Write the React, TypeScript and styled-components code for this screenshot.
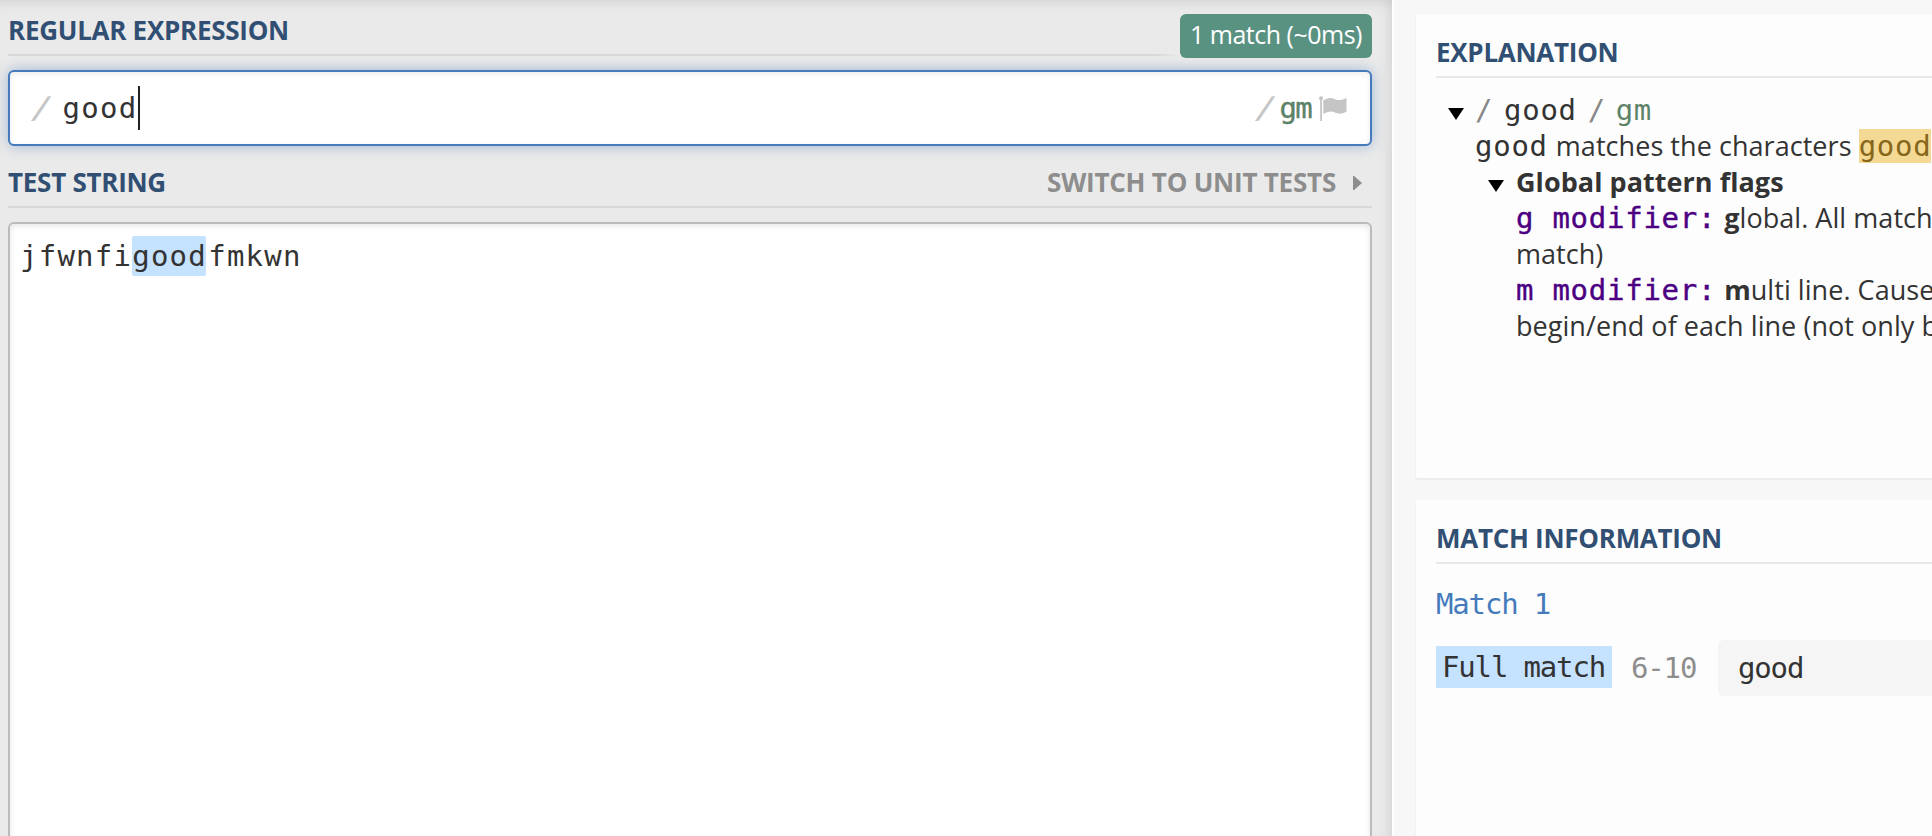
import React from "react";
import styled, { createGlobalStyle } from "styled-components";

const sans = `"Open Sans", "Noto Sans", sans-serif`;
const mono = `"DejaVu Sans Mono", "Liberation Mono", monospace`;

const GlobalStyle = createGlobalStyle`
  * { box-sizing: border-box; }
  body { margin: 0; overflow: hidden; background: #f7f7f7; }
`;

const Page = styled.div`
  display: flex;
  width: 1932px;
  height: 836px;
  overflow: hidden;
  font-family: ${sans};
  font-size: 26px;
  color: #333;
`;

const Editor = styled.main`
  flex: none;
  display: flex;
  flex-direction: column;
  width: 1394px;
  padding: 0 20px 0 8px;
  border-right: 2px solid #fff;
  background: #eaeaea;
  box-shadow: inset -12px 0 14px -10px rgba(0, 0, 0, 0.1), inset 0 12px 14px -10px rgba(0, 0, 0, 0.1);
`;

const TitleRow = styled.header<{ $fade?: boolean }>`
  position: relative;
  flex: none;
  display: flex;
  justify-content: space-between;
  height: 56px;
  border-bottom: 2px solid;
  border-color: ${(p) => (p.$fade ? "transparent" : "#d8d8d8")};
  ${(p) =>
    p.$fade &&
    `background: linear-gradient(90deg, #d8d8d8 1148px, transparent 1172px) left bottom / 100% 2px no-repeat border-box;`}
`;

const Title = styled.h2<{ $muted?: boolean }>`
  margin: 0;
  padding-top: 12px;
  font-size: 26px;
  line-height: 36px;
  font-weight: 700;
  letter-spacing: ${(p) => (p.$muted ? "-0.22px" : "-0.27px")};
  color: ${(p) => (p.$muted ? "#8d8d8d" : "#314f73")};
`;

const SwitchLink = styled.div`
  display: flex;
  gap: 17px;
  padding-right: 10px;
`;

const ArrowRight = styled.span`
  width: 9px;
  height: 14px;
  margin-top: 24px;
  background: #8d8d8d;
  clip-path: polygon(0 0, 12% 0, 100% 50%, 12% 100%, 0 100%);
`;

const MatchBadge = styled.div`
  width: 192px;
  height: 44px;
  margin-top: 14px;
  border-radius: 6px;
  background: #5a9282;
  color: #fff;
  font-size: 25px;
  letter-spacing: -0.5px;
  line-height: 41px;
  text-align: center;
  white-space: nowrap;
`;

const RegexField = styled.div`
  flex: none;
  display: flex;
  align-items: center;
  height: 76px;
  margin: 14px 0 6px;
  padding: 0 23px 0 23px;
  border: 2px solid #457bbb;
  border-radius: 6px;
  background: #fff;
  box-shadow: 0 0 14px rgba(69, 123, 187, 0.45), inset 0 2px 6px rgba(0, 0, 0, 0.08);
`;

const Mono = styled.span<{ $pitch: number; $color?: string; $heavy?: boolean; $left?: number }>`
  margin-left: ${(p) => p.$left ?? 0}px;
  font-family: ${mono};
  font-size: 29px;
  line-height: 36px;
  letter-spacing: ${(p) => p.$pitch - 17.46}px;
  color: ${(p) => p.$color ?? "#333"};
  ${(p) => p.$heavy && "-webkit-text-stroke: 0.4px currentColor;"}
  white-space: pre;
`;

const Slash = styled(Mono)`
  transform: skewX(-12deg);
  -webkit-text-stroke: 0.6px currentColor;
`;

const Caret = styled.span`
  width: 2px;
  height: 44px;
  margin-right: auto;
  background: #222;
`;

const FlagIcon = styled.svg`
  width: 28px;
  height: 25px;
  margin-left: 8px;
  fill: #c5c5c5;
`;

const TestArea = styled.div`
  flex: 1;
  margin-top: 14px;
  margin-bottom: -10px;
  padding: 12px 10px;
  border: 2px solid #bbb;
  border-radius: 6px;
  background: #fff;
  box-shadow: inset 0 2px 6px rgba(0, 0, 0, 0.1);
`;

const TestLine = styled.div`
  display: flex;
  & > span { line-height: 41px; height: 40px; }
`;

const Highlight = styled(Mono)`
  width: 74px;
  margin-right: 2px;
  border-radius: 2px;
  background: #c5e2ff;
`;

const Sidebar = styled.aside`
  flex: none;
  display: flex;
  flex-direction: column;
  gap: 20px;
  width: 538px;
  padding: 14px 0 0 21px;
  background: #f7f7f7;
`;

const Card = styled.section<{ $height: number }>`
  flex: none;
  height: ${(p) => p.$height}px;
  padding: 7px 0 0 20px;
  border: 1px solid #f1f1f1;
  border-right: 0;
  border-top-color: #fdfdfd;
  border-bottom: 2px solid #ececec;
  border-radius: 4px 0 0 4px;
  background: #fdfdfd;
`;

const CardTitle = styled(TitleRow)`
  height: 56px;
  border-color: #e8e8e8;
`;

const Tree = styled.div`
  display: flex;
  flex-direction: column;
  padding: 14px 0 0 12px;
`;

const Line = styled.div<{ $indent?: number }>`
  display: flex;
  align-items: baseline;
  height: 36px;
  padding-left: ${(p) => p.$indent ?? 0}px;
  font-size: 27px;
  letter-spacing: 0.05px;
  line-height: 36px;
  white-space: pre;
`;

const Copy = styled.span`
  margin-left: 8px;
`;

const Toggle = styled.span<{ $gap: number }>`
  width: 16px;
  height: 12px;
  margin-right: ${(p) => p.$gap}px;
  background: #000;
  clip-path: polygon(0 0, 100% 0, 50% 100%);
`;

const Literal = styled(Mono)`
  height: 34px;
  line-height: 34px;
  background: #f3d994;
`;

const MatchTitle = styled.div`
  margin-top: 22px;
  height: 36px;
`;

const MatchRow = styled.div`
  display: flex;
  align-items: center;
  margin-top: 18px;
`;

const GroupTag = styled.div`
  width: 176px;
  height: 42px;
  margin-top: -2px;
  padding-left: 6px;
  background: #c5e2ff;
  line-height: 42px;
`;

const Range = styled.div`
  width: 106px;
  padding-left: 19px;
`;

const MatchValue = styled.div`
  flex: 1;
  height: 56px;
  padding: 10px 0 0 20px;
  border-radius: 6px 0 0 6px;
  background: #f5f5f5;
`;

export default function App() {
  return (
    <Page>
      <GlobalStyle />
      <Editor>
        <TitleRow $fade>
          <Title>REGULAR EXPRESSION</Title>
          <MatchBadge>1 match (~0ms)</MatchBadge>
        </TitleRow>
        <RegexField>
          <Slash $pitch={17.4} $color="#c5c5c5">/</Slash>
          <Mono $pitch={18.8} $left={12}>good</Mono>
          <Caret />
          <Slash $pitch={17.4} $color="#c5c5c5">/</Slash>
          <Mono $pitch={15.8} $color="#5c8368" $heavy $left={5}>gm</Mono>
          <FlagIcon viewBox="0 0 28 25">
            <circle cx="2" cy="2.2" r="2" />
            <path d="M1.2 3H3V25H1.2Z" />
            <path d="M4.3 4.5C8 2.3 12 1 16 3.3C20 5 24 3.8 27.5 2V15.8C23 18 19.5 18.5 15.5 16.3C12 14.5 8 16 4.3 18Z" />
          </FlagIcon>
        </RegexField>
        <TitleRow>
          <Title>TEST STRING</Title>
          <SwitchLink>
            <Title $muted>SWITCH TO UNIT TESTS</Title>
            <ArrowRight />
          </SwitchLink>
        </TitleRow>
        <TestArea>
          <TestLine>
            <Mono $pitch={18.7}>jfwnfi</Mono>
            <Highlight $pitch={18.7}>good</Highlight>
            <Mono $pitch={18.7}>fmkwn</Mono>
          </TestLine>
        </TestArea>
      </Editor>
      <Sidebar>
        <Card $height={466}>
          <CardTitle><Title>EXPLANATION</Title></CardTitle>
          <Tree>
            <Line>
              <Toggle $gap={11} />
              <Mono $pitch={18} $color="#888">/</Mono>
              <Mono $pitch={18.2} $left={11}>good</Mono>
              <Mono $pitch={18} $color="#888" $left={11}>/</Mono>
              <Mono $pitch={18} $color="#5c8368" $left={10}>gm</Mono>
            </Line>
            <Line $indent={27}>
              <Mono $pitch={18.2}>good</Mono>
              <Copy>matches the characters </Copy>
              <Literal $pitch={18.2} $color="#86661a">good</Literal>
            </Line>
            <Line $indent={40}>
              <Toggle $gap={12} />
              <b>Global pattern flags</b>
            </Line>
            <Line $indent={68}>
              <Mono $pitch={18.2} $color="#4b0082" $heavy>g modifier:</Mono>
              <Copy><b>g</b>lobal. All match</Copy>
            </Line>
            <Line $indent={68}>match)</Line>
            <Line $indent={68}>
              <Mono $pitch={18.2} $color="#4b0082" $heavy>m modifier:</Mono>
              <Copy><b>m</b>ulti line. Cause</Copy>
            </Line>
            <Line $indent={68}>begin/end of each line (not only b</Line>
          </Tree>
        </Card>
        <Card $height={400}>
          <CardTitle><Title>MATCH INFORMATION</Title></CardTitle>
          <MatchTitle><Mono $pitch={16.3} $color="#457bbb">Match 1</Mono></MatchTitle>
          <MatchRow>
            <GroupTag><Mono $pitch={16.3}>Full match</Mono></GroupTag>
            <Range><Mono $pitch={16.3} $color="#8d8d8d">6-10</Mono></Range>
            <MatchValue><Mono $pitch={16.3}>good</Mono></MatchValue>
          </MatchRow>
        </Card>
      </Sidebar>
    </Page>
  );
}
